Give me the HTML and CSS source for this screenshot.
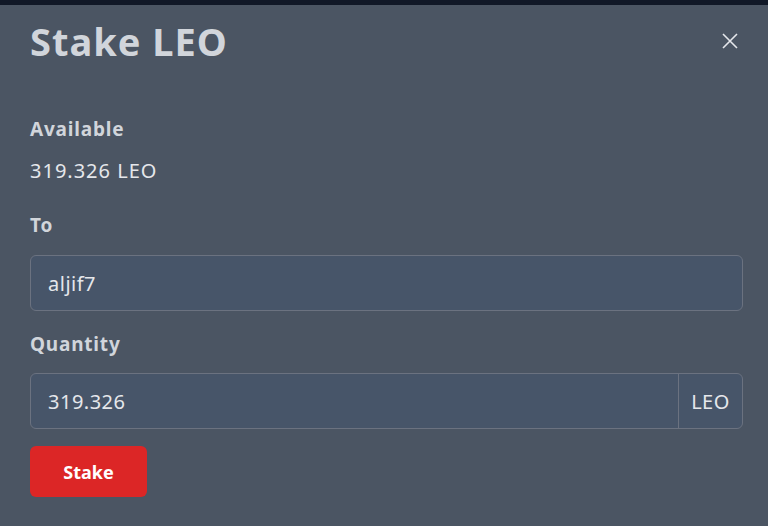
FILE: index.html
```html
<!DOCTYPE html>
<html>
<head>
<meta charset="utf-8">
<link rel="stylesheet" href="styles.css">
</head>
<body>
<div class="topbar"></div>
<div class="modal">
  <div class="header">
    <h1 class="title">Stake LEO</h1>
    <button class="close" aria-label="Close">
      <svg width="16" height="16" viewBox="0 0 16 16"><path d="M1 1L15 15M15 1L1 15" stroke="#e5e7eb" stroke-width="1.6" fill="none"/></svg>
    </button>
  </div>
  <div class="body">
    <div class="label">Available</div>
    <div class="value">319.326 LEO</div>
    <div class="label to">To</div>
    <div class="input">aljif7</div>
    <div class="label qty">Quantity</div>
    <div class="group">
      <div class="group-input">319.326</div>
      <div class="addon">LEO</div>
    </div>
    <button class="stake">Stake</button>
  </div>
</div>
</body>
</html>
```
FILE: styles.css
```css
* { box-sizing: border-box; }
html, body { margin: 0; padding: 0; }
body {
  width: 768px; height: 526px; overflow: hidden;
  background: #4b5563;
  font-family: "Noto Sans", sans-serif;
  color: #e5e7eb;
}
.topbar { height: 5px; background: #111827; }
.modal { padding: 0 25px 0 30px; }
.header { display: flex; justify-content: space-between; align-items: center; height: 72px; }
.title { margin: 0; font-size: 38px; font-weight: 700; color: #d1d5db; letter-spacing: 1px; }
.close { background: none; border: 0; padding: 0; width: 16px; height: 16px; margin-right: 5px; display: flex; }
.body { display: flex; flex-direction: column; align-items: flex-start; padding-top: 40px; }
.label { font-size: 19px; font-weight: 700; color: #d1d5db; line-height: 24px; letter-spacing: 0.8px; }
.value { font-size: 20px; margin-top: 18px; line-height: 24px; color: #e5e7eb; letter-spacing: 1px; }
.to { margin-top: 30px; }
.input {
  margin-top: 18px; width: 713px; height: 56px;
  background: #475569; border: 1px solid #6b7280; border-radius: 6px;
  padding: 0 17px; display: flex; align-items: center; font-size: 20px; color: #e5e7eb; letter-spacing: 0.5px;
}
.qty { margin-top: 21px; }
.group {
  margin-top: 17px; width: 713px; height: 56px; display: flex;
  background: #475569; border: 1px solid #6b7280; border-radius: 6px;
}
.group-input { flex: 1; display: flex; align-items: center; padding: 0 17px; font-size: 20px; letter-spacing: 0.5px; }
.addon { width: 64px; border-left: 1px solid #6b7280; display: flex; align-items: center; justify-content: center; font-size: 20px; letter-spacing: 0.5px; }
.stake {
  margin-top: 17px; width: 117px; height: 51px; border: 0; border-radius: 6px;
  background: #dc2626; color: #fff; font-family: inherit; font-size: 18px; font-weight: 700;
}
```
